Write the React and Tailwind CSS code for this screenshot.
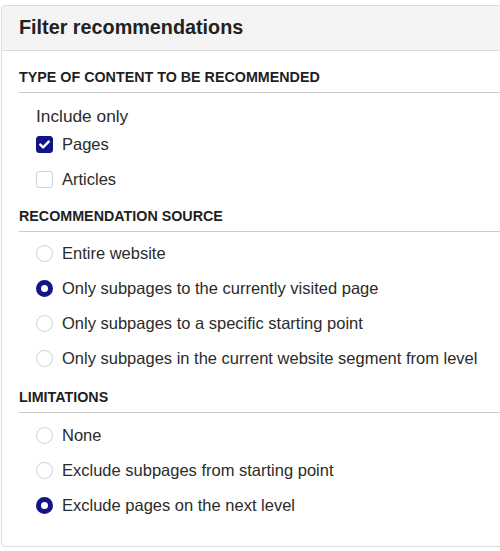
import React, { useState } from 'react';

function Checkbox({ checked, label, onChange }) {
  return (
    <label className="flex items-center h-[35px] pl-[17px] cursor-pointer">
      <span
        onClick={onChange}
        className={`w-[17px] h-[17px] rounded-[3px] flex items-center justify-center ${
          checked ? 'bg-[#13138a] border border-[#13138a]' : 'bg-white border border-[#cfcfcf]'
        }`}
      >
        {checked && (
          <svg width="11" height="9" viewBox="0 0 11 9">
            <path d="M1.3 4.6 L4.1 7.3 L9.7 1.6" fill="none" stroke="white" strokeWidth="2.4" strokeLinecap="round" strokeLinejoin="round" />
          </svg>
        )}
      </span>
      <span className="ml-[9px] text-[16.5px] text-[#2b2b2b]">{label}</span>
    </label>
  );
}

function Radio({ checked, label, onClick }) {
  return (
    <label onClick={onClick} className="flex items-center h-[35px] pl-[17px] cursor-pointer">
      <span
        className={`w-[17px] h-[17px] rounded-full bg-white shrink-0 ${
          checked ? 'border-[5px] border-[#13138a]' : 'border border-[#cfcfcf]'
        }`}
      />
      <span className="ml-[9px] text-[16.5px] text-[#2b2b2b] whitespace-nowrap">{label}</span>
    </label>
  );
}

function Heading({ children, className = '' }) {
  return (
    <div className={`text-[14.3px] font-bold leading-[16px] pb-[7px] border-b border-[#cccccc] text-[#1f1f1f] whitespace-nowrap ${className}`}>
      {children}
    </div>
  );
}

export default function App() {
  const [types, setTypes] = useState({ pages: true, articles: false });
  const [source, setSource] = useState(1);
  const [limit, setLimit] = useState(2);

  const sources = [
    'Entire website',
    'Only subpages to the currently visited page',
    'Only subpages to a specific starting point',
    'Only subpages in the current website segment from level',
  ];
  const limits = ['None', 'Exclude subpages from starting point', 'Exclude pages on the next level'];

  return (
    <div className="w-[500px] h-[551px] overflow-hidden bg-white pt-[5px] pl-[1px]" style={{ fontFamily: '"Liberation Sans", Arial, sans-serif' }}>
      <div className="w-[520px] border border-[#dcdcdc] rounded-[4px] bg-white">
        <div className="h-[45px] bg-[#f4f4f4] border-b border-[#dcdcdc] rounded-t-[4px] flex items-center pl-[17px]">
          <h1 className="text-[19.8px] font-bold text-[#222]">Filter recommendations</h1>
        </div>
        <div className="pl-[17px] pt-[18px] pb-[23px]">
          <Heading>TYPE OF CONTENT TO BE RECOMMENDED</Heading>
          <div className="mt-[12px] h-[22px] leading-[22px] pl-[17px] text-[17.3px] text-[#2b2b2b]">Include only</div>
          <Checkbox checked={types.pages} label="Pages" onChange={() => setTypes({ ...types, pages: !types.pages })} />
          <Checkbox checked={types.articles} label="Articles" onChange={() => setTypes({ ...types, articles: !types.articles })} />

          <Heading className="mt-[11px]">RECOMMENDATION SOURCE</Heading>
          <div className="mt-[4px]">
            {sources.map((s, i) => (
              <Radio key={s} label={s} checked={source === i} onClick={() => setSource(i)} />
            ))}
          </div>

          <Heading className="mt-[13px]">LIMITATIONS</Heading>
          <div className="mt-[5px]">
            {limits.map((s, i) => (
              <Radio key={s} label={s} checked={limit === i} onClick={() => setLimit(i)} />
            ))}
          </div>
        </div>
      </div>
    </div>
  );
}
